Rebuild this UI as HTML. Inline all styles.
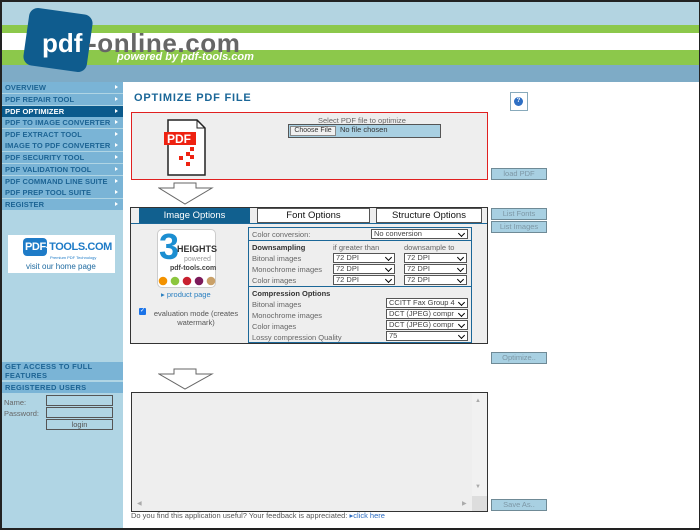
<!DOCTYPE html>
<html><head><meta charset="utf-8"><style>
*{margin:0;padding:0;box-sizing:border-box}
body{width:700px;height:530px;overflow:hidden;background:#fff;font-family:"Liberation Sans",sans-serif;font-size:8px;color:#555;position:relative}
.a{position:absolute}
.frame{position:absolute;left:0;top:0;width:700px;height:530px;border:2px solid #222;border-right-width:1px;pointer-events:none;z-index:9}
.mi{position:absolute;left:2px;width:121px;height:11px;background:#7ab4d6;color:#1d6494;font-weight:bold;font-size:7.5px;line-height:11px;padding-left:3px;letter-spacing:.1px;white-space:nowrap;overflow:hidden}
.mi:after{content:"";position:absolute;right:5px;top:3px;border-left:3px solid #fff;border-top:2.5px solid transparent;border-bottom:2.5px solid transparent}
.mi.act{background:#0b5a8c;color:#fff}
.btn{position:absolute;left:491px;width:56px;height:12px;background:#a8d0e2;border:1px solid #6f8a96;color:#7d97a5;font-size:7.5px;text-align:center;line-height:10px}
.sel{position:absolute;height:10px;border:1px solid #555;background:#fff;font-size:7.5px;line-height:8px;padding-left:2px;color:#444;overflow:hidden;white-space:nowrap}
.sel:after{content:"";position:absolute;right:3px;top:1px;width:4px;height:4px;border-right:1.5px solid #000;border-bottom:1.5px solid #000;transform:rotate(45deg)}
.lbl{position:absolute;font-size:7.5px;color:#666;white-space:nowrap}
.tab{position:absolute;top:208px;height:15px;border:1px solid #555;background:#fff;color:#111;font-size:9.5px;text-align:center;line-height:13px}
</style></head><body>
<div class="frame"></div>
<div class="a" style="left:0;top:0;width:700px;height:25px;background:#b3d4e1"></div>
<div class="a" style="left:0;top:25px;width:700px;height:8px;background:#8cc84b"></div>
<div class="a" style="left:0;top:33px;width:700px;height:17px;background:#fff"></div>
<div class="a" style="left:0;top:50px;width:700px;height:15px;background:#8cc84b"></div>
<div class="a" style="left:0;top:65px;width:700px;height:17px;background:#7eabc6"></div>
<div class="a" style="left:26px;top:11px;width:64px;height:58px;background:#0f5c8e;border-radius:9px;transform:rotate(8deg)"></div>
<div class="a" style="left:42px;top:28px;font:bold 26px 'Liberation Sans',sans-serif;color:#fff">pdf</div>
<div class="a" style="left:88px;top:28px;font:bold 26px 'Liberation Sans',sans-serif;color:#666;letter-spacing:.6px">-online.com</div>
<div class="a" style="left:117px;top:51px;font:italic bold 11px 'Liberation Sans',sans-serif;color:#fff">powered by pdf-tools.com</div>
<div class="a" style="left:2px;top:82px;width:121px;height:446px;background:#b0d5e4"></div>
<div class="mi" style="top:82px">OVERVIEW</div>
<div class="mi" style="top:94px">PDF REPAIR TOOL</div>
<div class="mi act" style="top:106px">PDF OPTIMIZER</div>
<div class="mi" style="top:117px">PDF TO IMAGE CONVERTER</div>
<div class="mi" style="top:129px">PDF EXTRACT TOOL</div>
<div class="mi" style="top:140px">IMAGE TO PDF CONVERTER</div>
<div class="mi" style="top:152px">PDF SECURITY TOOL</div>
<div class="mi" style="top:164px">PDF VALIDATION TOOL</div>
<div class="mi" style="top:176px">PDF COMMAND LINE SUITE</div>
<div class="mi" style="top:187px">PDF PREP TOOL SUITE</div>
<div class="mi" style="top:199px">REGISTER</div>
<div class="a" style="left:8px;top:235px;width:107px;height:38px;background:#fff"></div>
<div class="a" style="left:23px;top:238px;width:24px;height:18px;background:#1e7bc7;border-radius:4px"></div>
<div class="a" style="left:25px;top:241px;font:bold 11px 'Liberation Sans',sans-serif;color:#fff;letter-spacing:-.4px">PDF-<span style="color:#1e7bc7">TOOLS.COM</span></div>
<div class="a" style="left:50px;top:255px;font-size:4px;color:#1e7bc7">Premium PDF Technology</div>
<div class="a" style="left:26px;top:262px;font-size:8px;color:#1e6aa0">visit our home page</div>
<div class="a" style="left:2px;top:362px;width:121px;height:18px;background:#7ab4d6;color:#1d6494;font-weight:bold;font-size:7.5px;padding:1px 3px;line-height:8.5px;letter-spacing:.3px">GET ACCESS TO FULL FEATURES</div>
<div class="a" style="left:2px;top:382px;width:121px;height:11px;background:#7ab4d6;color:#1d6494;font-weight:bold;font-size:7.5px;padding-left:3px;line-height:11px;letter-spacing:.3px">REGISTERED USERS</div>
<div class="lbl" style="left:4px;top:398px">Name:</div>
<div class="lbl" style="left:4px;top:409px">Password:</div>
<div class="a" style="left:46px;top:395px;width:67px;height:11px;border:1px solid #555;background:#b0d5e4"></div>
<div class="a" style="left:46px;top:407px;width:67px;height:11px;border:1px solid #555;background:#b0d5e4"></div>
<div class="a" style="left:46px;top:419px;width:67px;height:11px;border:1px solid #555;background:#b0d5e4;text-align:center;font-size:7.5px;line-height:9px">login</div>
<div class="a" style="left:134px;top:92px;font-weight:bold;font-size:11px;color:#1b6798;letter-spacing:.8px">OPTIMIZE PDF FILE</div>
<div class="a" style="left:510px;top:92px;width:18px;height:19px;border:1px solid #8ab;background:#fff"></div>
<div class="a" style="left:514px;top:97px;width:9px;height:9px;border-radius:50%;background:#2e6fc4;color:#fff;font-size:6px;text-align:center;line-height:9px;font-weight:bold">?</div>
<div class="a" style="left:131px;top:112px;width:357px;height:68px;border:1px solid #e02020;background:#eee"></div>
<svg class="a" style="left:162px;top:118px" width="50" height="60"><path d="M6 2H35L43 10V57H6Z" fill="#fff" stroke="#222" stroke-width="1.5"/><path d="M35 2V10H43" fill="none" stroke="#222"/><rect x="2" y="14" width="32" height="13" fill="#e21"/><text x="5" y="25" fill="#fff" font-family="Liberation Sans" font-weight="bold" font-size="12">PDF</text><g fill="#e21"><rect x="28" y="29" width="4" height="4"/><rect x="24" y="34" width="4" height="4"/><rect x="28" y="37" width="4" height="4"/><rect x="17" y="38" width="4" height="4"/><rect x="24" y="44" width="4" height="4"/></g></svg>
<div class="a" style="left:318px;top:116px;font-size:7.5px;color:#666">Select PDF file to optimize</div>
<div class="a" style="left:288px;top:124px;width:153px;height:14px;border:1px solid #555;background:#a9d0e2"></div>
<div class="a" style="left:290px;top:126px;width:46px;height:10px;border:1px solid #888;background:#f0f0f0;font-size:7px;line-height:8px;text-align:center;color:#333">Choose File</div>
<div class="a" style="left:340px;top:125px;font-size:7.5px;color:#333">No file chosen</div>
<div class="btn" style="top:168px">load PDF</div>
<svg class="a" style="left:158px;top:182px" width="56" height="24"><path d="M16 1H38V6H54L27 22L1 6H16Z" fill="#fff" stroke="#666"/></svg>
<div class="a" style="left:130px;top:207px;width:358px;height:137px;border:1px solid #333;background:#eee"></div>
<div class="tab" style="left:139px;width:111px;background:#11608f;color:#fff;border-color:#11608f">Image Options</div>
<div class="tab" style="left:257px;width:113px">Font Options</div>
<div class="tab" style="left:376px;width:106px">Structure Options</div>
<div class="a" style="left:131px;top:223px;width:356px;height:1px;background:#1b6798"></div>
<div class="btn" style="top:208px">List Fonts</div>
<div class="btn" style="top:221px">List Images</div>
<div class="a" style="left:157px;top:229px;width:59px;height:59px;border:1px solid #ccc;border-radius:5px;background:#fff"></div>
<div class="a" style="left:159px;top:226px;font:bold 36px 'Liberation Sans',sans-serif;color:#1b8ed1">3</div>
<div class="a" style="left:177px;top:244px;font:bold 9px 'Liberation Sans',sans-serif;color:#333">HEIGHTS</div>
<div class="a" style="left:184px;top:256px;font-size:7px;color:#999">powered</div>
<div class="a" style="left:170px;top:265px;font:bold 7px 'Liberation Sans',sans-serif;color:#444">pdf-tools.com</div>
<svg class="a" style="left:158px;top:276px" width="58" height="10"><circle cx="5" cy="5" r="4.3" fill="#f39200"/><circle cx="17" cy="5" r="4.3" fill="#8cc63e"/><circle cx="29" cy="5" r="4.3" fill="#c8202f"/><circle cx="41" cy="5" r="4.3" fill="#7c1a5a"/><circle cx="53" cy="5" r="4.3" fill="#c9a068"/></svg>
<div class="a" style="left:161px;top:290px;font-size:7.5px;color:#2a7fc0">▸ product page</div>
<div class="a" style="left:139px;top:308px;width:7px;height:7px;background:#1a73e8;border-radius:1px;color:#fff;font-size:6px;line-height:7px;text-align:center">✓</div>
<div class="a" style="left:146px;top:309px;font-size:7.5px;color:#555;width:100px;text-align:center;line-height:9px">evaluation mode (creates watermark)</div>
<div class="a" style="left:248px;top:227px;width:224px;height:116px;border:1px solid #1b6798;background:#eee"></div>
<div class="a" style="left:248px;top:240px;width:224px;height:1px;background:#1b6798"></div>
<div class="a" style="left:248px;top:286px;width:224px;height:1px;background:#1b6798"></div>
<div class="lbl" style="left:252px;top:230px">Color conversion:</div>
<div class="sel" style="left:371px;top:229px;width:97px">No conversion</div>
<div class="lbl" style="left:252px;top:243px;font-weight:bold;color:#333">Downsampling</div>
<div class="lbl" style="left:333px;top:243px">if greater than</div>
<div class="lbl" style="left:404px;top:243px">downsample to</div>
<div class="lbl" style="left:252px;top:254px">Bitonal images</div>
<div class="lbl" style="left:252px;top:265px">Monochrome images</div>
<div class="lbl" style="left:252px;top:276px">Color images</div>
<div class="sel" style="left:333px;top:253px;width:62px">72 DPI</div>
<div class="sel" style="left:333px;top:264px;width:62px">72 DPI</div>
<div class="sel" style="left:333px;top:275px;width:62px">72 DPI</div>
<div class="sel" style="left:404px;top:253px;width:63px">72 DPI</div>
<div class="sel" style="left:404px;top:264px;width:63px">72 DPI</div>
<div class="sel" style="left:404px;top:275px;width:63px">72 DPI</div>
<div class="lbl" style="left:252px;top:289px;font-weight:bold;color:#333">Compression Options</div>
<div class="lbl" style="left:252px;top:300px">Bitonal images</div>
<div class="lbl" style="left:252px;top:311px">Monochrome images</div>
<div class="lbl" style="left:252px;top:322px">Color images</div>
<div class="lbl" style="left:252px;top:333px">Lossy compression Quality</div>
<div class="sel" style="left:386px;top:298px;width:82px">CCITT Fax Group 4</div>
<div class="sel" style="left:386px;top:309px;width:82px">DCT (JPEG) compr</div>
<div class="sel" style="left:386px;top:320px;width:82px">DCT (JPEG) compr</div>
<div class="sel" style="left:386px;top:331px;width:82px">75</div>
<div class="btn" style="top:352px">Optimize..</div>
<svg class="a" style="left:158px;top:368px" width="56" height="23"><path d="M16 1H38V6H54L27 21L1 6H16Z" fill="#fff" stroke="#666"/></svg>
<div class="a" style="left:131px;top:392px;width:357px;height:120px;border:1px solid #333;background:#eee"></div>
<div class="a" style="left:472px;top:393px;width:15px;height:103px;background:#f1f1f1"></div>
<div class="a" style="left:475px;top:398px;font-size:6px;color:#aaa">▲</div>
<div class="a" style="left:475px;top:484px;font-size:6px;color:#aaa">▼</div>
<div class="a" style="left:137px;top:500px;font-size:6px;color:#aaa">◀</div>
<div class="a" style="left:462px;top:500px;font-size:6px;color:#aaa">▶</div>
<div class="a" style="left:472px;top:496px;width:15px;height:15px;background:#ddd"></div>
<div class="btn" style="top:499px">Save As..</div>
<div class="a" style="left:131px;top:511px;font-size:7.5px;color:#555">Do you find this application useful? Your feedback is appreciated: <span style="color:#2a6ac0">▸click here</span></div>
</body></html>
